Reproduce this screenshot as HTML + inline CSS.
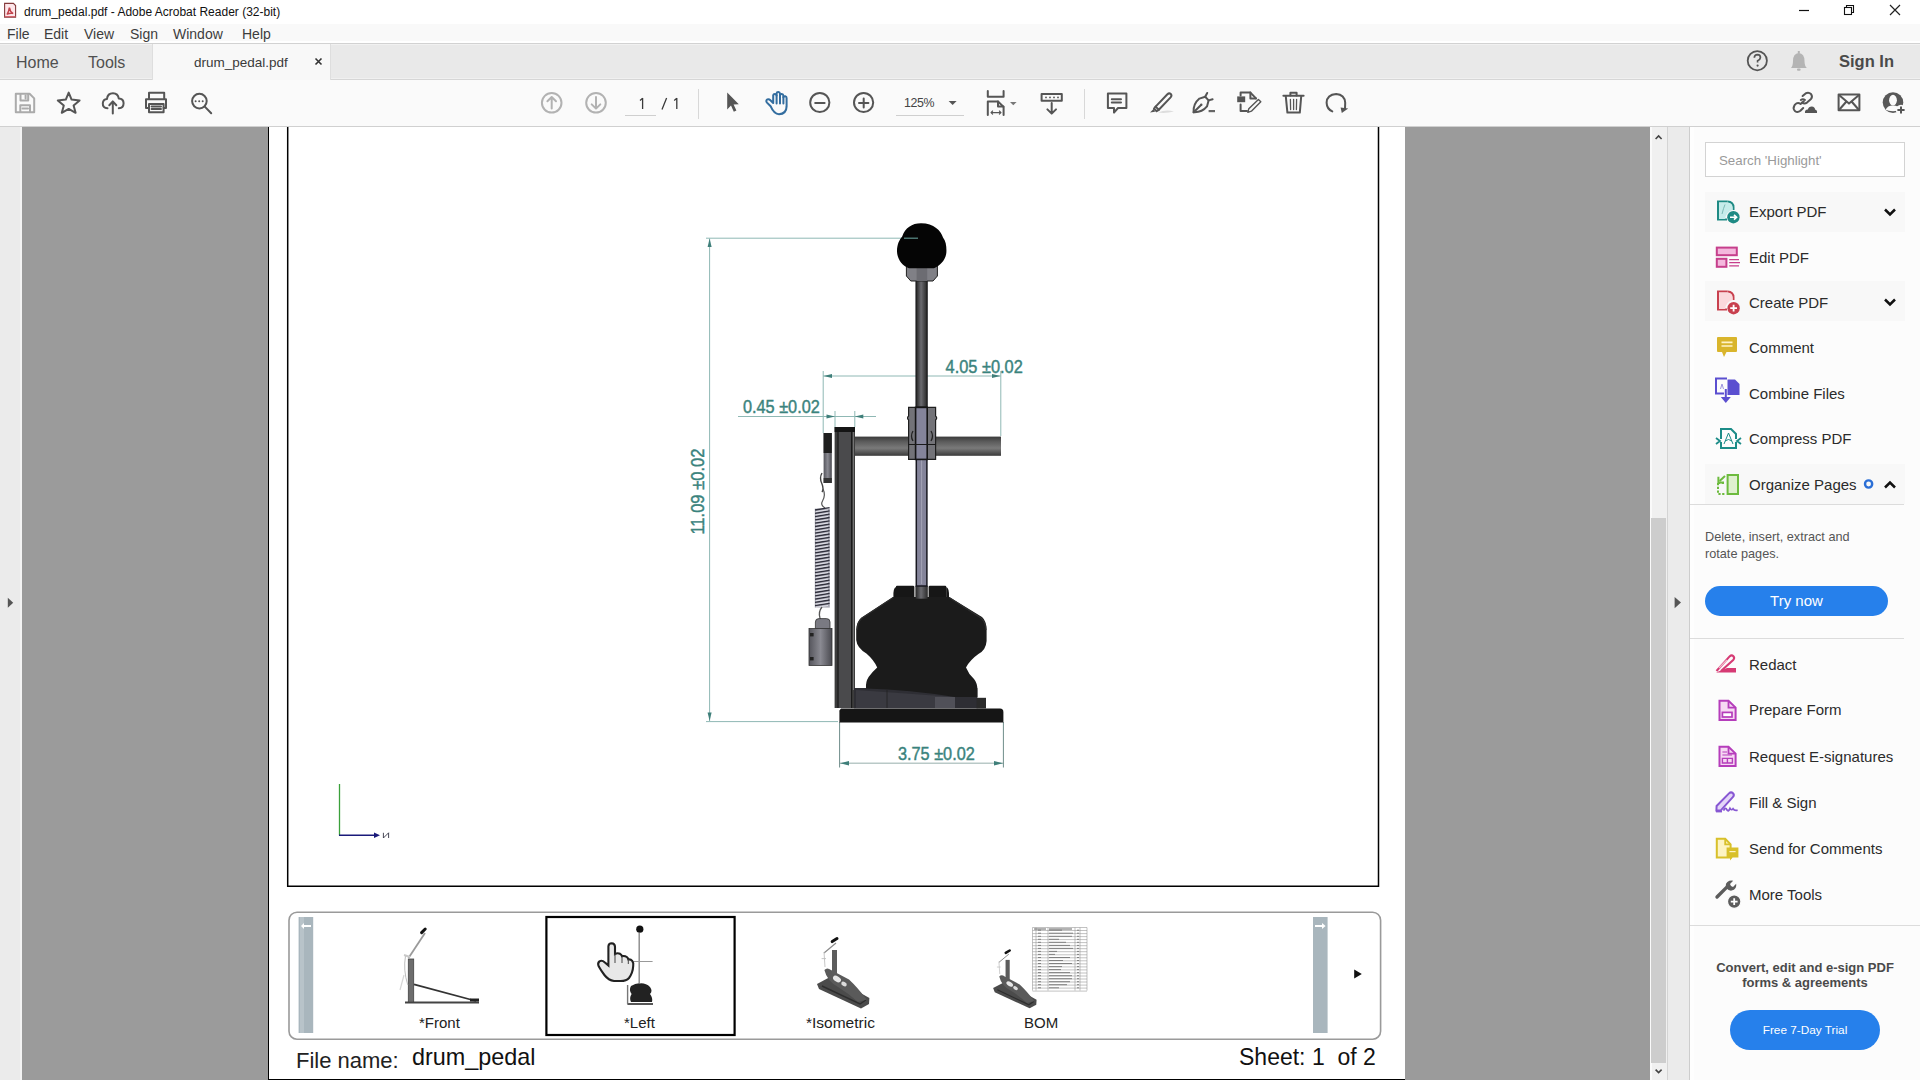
<!DOCTYPE html>
<html><head><meta charset="utf-8">
<style>
*{margin:0;padding:0;box-sizing:border-box}
html,body{width:1920px;height:1080px;overflow:hidden;background:#fff;font-family:"Liberation Sans",sans-serif;color:#222}
.a{position:absolute;white-space:nowrap}
svg{position:absolute;overflow:visible}
.ic{fill:none;stroke:#555;stroke-width:2;stroke-linecap:round;stroke-linejoin:round}
.dis{stroke:#b2b2b2}
.mi{font-size:14px;color:#3d3d3d;top:26px}
.tl{font-size:15px;color:#2b2b2b}
</style></head><body>
<!-- title bar -->
<div class="a" style="left:0;top:0;width:1920px;height:22px;background:#fff"></div>
<svg style="left:0;top:0" width="20" height="22"><path d="M4.6 3.4 H13.4 L15.6 5.6 V17.2 H4.6 Z" fill="#fde6ea" stroke="#84393b" stroke-width="1.1"/><path d="M9.4 7.6 Q9 11 7 14.6 M9.4 7.6 Q10 12 13.2 13.6 M7.2 14.2 Q10 12.6 13 13.4" fill="none" stroke="#c2434c" stroke-width="1.5"/><path d="M4.6 16.6 H15.6" stroke="#d25a64" stroke-width="1"/></svg>
<div class="a" style="left:24px;top:5px;font-size:12px;color:#111">drum_pedal.pdf - Adobe Acrobat Reader (32-bit)</div>
<svg style="left:0;top:0" width="1920" height="22">
<path d="M1799 10.5 H1809" stroke="#111" stroke-width="1.2"/>
<rect x="1844.5" y="7.5" width="7" height="7" fill="none" stroke="#111" stroke-width="1.1"/>
<path d="M1846.5 7.5 V5.5 H1853.5 V12.5 H1851.5" fill="none" stroke="#111" stroke-width="1.1"/>
<path d="M1890 5 L1900 15 M1900 5 L1890 15" stroke="#222" stroke-width="1.2"/>
</svg>
<!-- menu -->
<div class="a" style="left:0;top:24px;width:1920px;height:17px;background:#f9f9f9"></div>
<div class="a mi" style="left:7px">File</div>
<div class="a mi" style="left:44px">Edit</div>
<div class="a mi" style="left:84px">View</div>
<div class="a mi" style="left:130px">Sign</div>
<div class="a mi" style="left:173px">Window</div>
<div class="a mi" style="left:242px">Help</div>
<!-- tab bar -->
<div class="a" style="left:0;top:43px;width:1920px;height:37px;background:#e9e9e9;border-top:1px solid #d2d2d2;border-bottom:1px solid #d6d6d6"></div>
<div class="a" style="left:0;top:44px;width:1920px;height:1px;background:#f1f1f1"></div>
<div class="a" style="left:0;top:78px;width:1920px;height:1px;background:#f0f0f0"></div>
<div class="a" style="left:152px;top:44px;width:179px;height:36px;background:#f8f8f8;border-left:1px solid #dedede;border-right:1px solid #dedede"></div>
<div class="a" style="left:16px;top:54px;font-size:16px;color:#505050">Home</div>
<div class="a" style="left:88px;top:54px;font-size:16px;color:#505050">Tools</div>
<div class="a" style="left:194px;top:55px;font-size:13.5px;color:#3a3a3a">drum_pedal.pdf</div>
<svg style="left:0;top:0" width="400" height="80"><path d="M315.5 58.5 L321.5 64.5 M321.5 58.5 L315.5 64.5" stroke="#333" stroke-width="1.6"/></svg>
<!-- help / bell / sign in -->
<svg style="left:0;top:0" width="1920" height="80">
<circle cx="1757.3" cy="60.7" r="9.6" fill="none" stroke="#555" stroke-width="1.8"/>
<path d="M1754.3 57.8 Q1754.5 54.6 1757.5 54.6 Q1760.5 54.8 1760.4 57.6 Q1760.2 59.6 1757.6 60.8 V62.5" fill="none" stroke="#555" stroke-width="1.7"/>
<circle cx="1757.6" cy="65.6" r="1.1" fill="#555"/>
<path d="M1791 68 Q1793 66 1793 61 Q1793 53.5 1798.8 53 Q1804.5 53.5 1804.5 61 Q1804.5 66 1806.8 68 Z" fill="#b4b4b4"/>
<rect x="1797" y="68.5" width="3.6" height="2.2" rx="1" fill="#b4b4b4"/>
<rect x="1797.8" y="51" width="2" height="2.5" fill="#b4b4b4"/>
</svg>
<div class="a" style="left:1839px;top:52px;font-size:16.5px;font-weight:bold;color:#4a4a4a">Sign In</div>
<!-- toolbar -->
<div class="a" style="left:0;top:80px;width:1920px;height:47px;background:#fafafa;border-bottom:1px solid #d0d0d0"></div>
<svg style="left:0;top:0" width="700" height="127"><path d="M642.6 98 V109 M642.6 98.2 L640 100.4 M666.6 98 L662 109.4 M676.8 98 V109 M676.8 98.2 L674.2 100.4" fill="none" stroke="#3a3a3a" stroke-width="1.3"/></svg>
<div class="a" style="left:625px;top:115px;width:31px;height:1px;background:#cfcfcf"></div>
<div class="a" style="left:904px;top:95.5px;font-size:12.4px;letter-spacing:-0.4px;color:#444">125%</div>
<div class="a" style="left:896px;top:115px;width:68px;height:1px;background:#cfcfcf"></div>
<div class="a" style="left:698px;top:89px;width:1px;height:30px;background:#d8d8d8"></div>
<div class="a" style="left:1084px;top:89px;width:1px;height:30px;background:#d8d8d8"></div>
<!-- toolbar icons -->
<svg style="left:0;top:0" width="1920" height="127">
<g class="ic" stroke-width="1.6" style="stroke:#ababab">
<path d="M15.8 93.8 H29.6 L34.2 98.4 V112.2 H15.8 Z"/>
<path d="M20.5 94 V100.6 H28.2 V94"/><path d="M25.6 95.5 V98.5"/>
<path d="M20.3 112 V105.2 H30 V112"/><path d="M22.5 108.6 H28"/>
</g>
<path class="ic" stroke-width="1.8" d="M68.7 92.6 L71.6 99.6 L79.6 100.4 L73.6 105.5 L75.6 112.8 L68.7 108.9 L61.8 112.8 L63.8 105.5 L57.8 100.4 L65.8 99.6 Z"/>
<path class="ic" stroke-width="1.8" d="M107.5 108.3 Q102.6 108 102.8 103.4 Q103 99.3 107 98.9 Q107.6 93.3 113 93.3 Q118 93.4 118.8 98.6 Q123.5 98.9 123.6 103.2 Q123.5 108 118.8 108.3"/>
<path class="ic" stroke-width="1.8" d="M112.8 113.4 V101.6 M109.3 105.2 L112.8 101.4 L116.3 105.2"/>
<g class="ic" stroke-width="1.9">
<path d="M149 98.6 V92.8 H164.2 V98.6"/>
<path d="M149 108 H146 V99.2 H166 V108 H163.6"/>
<path d="M149 104 V112.3 H163.6 V104 Z"/>
<path d="M151.6 106.5 H161 M151.6 109 H161"/>
</g>
<circle class="ic" stroke-width="2.1" cx="199.4" cy="101.1" r="7.3"/>
<path class="ic" stroke-width="2.4" d="M204.8 106.6 L211.2 113.2"/>
<circle cx="195.6" cy="101.2" r="1" fill="#555"/><circle cx="199.2" cy="101.2" r="1" fill="#555"/><circle cx="202.7" cy="101.2" r="1" fill="#555"/>
<!-- nav -->
<circle class="ic dis" stroke-width="2" cx="551.7" cy="102.8" r="9.8"/>
<path class="ic dis" stroke-width="2" d="M551.7 108.6 V97.2 M547.4 101.2 L551.7 97 L556 101.2"/>
<circle class="ic dis" stroke-width="2" cx="596" cy="102.8" r="9.8"/>
<path class="ic dis" stroke-width="2" d="M596 97 V108.4 M591.7 104.4 L596 108.6 L600.3 104.4"/>
<!-- select arrow -->
<path d="M727.2 92.6 L738.8 104.3 L733.6 104.4 L736.4 110.6 L733.8 111.8 L731 105.6 L727.2 109.4 Z" fill="#555"/>
<!-- hand -->
<path class="ic" stroke="#2f6ea5" stroke-width="1.9" style="stroke:#336d9f" d="M770.6 106.2 L767 102.6 Q765.4 100.6 767.4 99.4 Q768.9 98.7 770.4 100.2 L773.2 103 V95.3 Q773.5 93.9 775 94 Q776.4 94.1 776.6 95.6 V93.4 Q776.8 91.9 778.4 92 Q779.8 92.1 780 93.6 V95.2 Q780.3 93.8 781.7 93.9 Q783.2 94.1 783.4 95.6 V97.3 Q783.8 96 785.3 96.2 Q786.6 96.5 786.6 98 V106.4 Q786.4 114 779 114.2 Q774 114.2 770.6 106.2 Z"/>
<path class="ic" style="stroke:#336d9f" stroke-width="1.7" d="M776.6 95.6 V103.4 M780 95 V103.4 M783.4 97 V103.4"/>
<!-- zoom -->
<circle class="ic" stroke-width="1.9" cx="819.8" cy="102.5" r="9.6"/>
<path class="ic" stroke-width="2" d="M815.2 103 H824.6"/>
<circle class="ic" stroke-width="1.9" cx="863.6" cy="102.5" r="9.6"/>
<path class="ic" stroke-width="2" d="M859 103 H868.4 M863.7 98.4 V107.6"/>
<path d="M948.6 101 H956.6 L952.6 105 Z" fill="#555"/>
<!-- fit page -->
<g class="ic" stroke-width="1.7">
<path d="M987.8 91 V96.8 H1003.6 V91"/>
<path d="M987.8 115 V101.4 H998 L1003.6 107 V115"/>
<path d="M998 101.6 V106.4 H1003.4"/>
<path d="M991 112.6 H1001 M991 112.6 L992.6 111 M991 112.6 L992.6 114.2 M1001 112.6 L999.4 111 M1001 112.6 L999.4 114.2" stroke-width="1.1"/>
</g>
<path d="M1010 102 H1016.6 L1013.3 105.3 Z" fill="#777"/>
<!-- scroll -->
<rect class="ic" stroke-width="1.8" x="1041.6" y="94" width="20.2" height="6.8"/>
<g fill="#555"><circle cx="1046" cy="97.4" r="0.9"/><circle cx="1050" cy="97.4" r="0.9"/><circle cx="1054" cy="97.4" r="0.9"/><circle cx="1058" cy="97.4" r="0.9"/></g>
<path class="ic" stroke-width="1.8" d="M1051.7 103 V113.6 M1047.4 109.4 L1051.7 113.6 L1056 109.4"/>
<!-- comment -->
<path class="ic" stroke-width="1.9" d="M1107.9 93.6 H1126.4 V108 H1118 L1114 112.6 V108 H1107.9 Z"/>
<path class="ic" stroke-width="1.6" d="M1111.8 99.2 H1121 M1111.8 102.4 H1121"/>
<!-- highlighter -->
<path class="ic" stroke-width="1.8" d="M1155.6 106.6 L1167.4 94.2 Q1169.2 92.6 1170.8 94 Q1172.2 95.6 1170.6 97.4 L1158.8 109.8 Z"/>
<path class="ic" stroke-width="1.6" d="M1155.6 106.6 L1154 108.6 L1156.6 111.2 L1158.8 109.8"/>
<path d="M1154 108.6 L1150 112.6 L1155 111.8 Z" fill="#555"/>
<path d="M1158 112.6 Q1166 109 1174 111.5 Q1166 113.6 1158 112.6 Z" fill="#ddd"/>
<!-- sign -->
<path class="ic" stroke-width="1.7" d="M1193.6 112.2 Q1193 104 1199.4 98.6 L1205.2 96.8 L1208.6 100.4 L1207 106.4 Q1202 112.6 1193.6 112.2 Z"/>
<path class="ic" stroke-width="1.7" d="M1205.2 96.8 L1207.2 93 M1208.6 100.4 L1212.6 99.2 M1193.6 112.2 L1200.8 105.2"/>
<circle cx="1201.3" cy="104.7" r="1.2" fill="#555"/>
<path d="M1208.6 110 H1215 V112.2 H1208.6 Z" fill="#666"/>
<!-- edit page -->
<g class="ic" stroke-width="1.8">
<path d="M1240.6 104.4 V111 H1247"/>
<path d="M1240.6 95.6 V92.6 H1250.4 L1256 98.4"/>
<path d="M1250.4 92.6 V98.4 H1256"/>
<path d="M1247.8 112.4 L1248.8 108.8 L1258.4 99.4 L1260.8 101.8 L1251.4 111.2 Z" stroke-width="1.4"/>
</g>
<rect x="1237.2" y="96.4" width="8" height="5.8" fill="#555"/>
<!-- trash -->
<g class="ic" stroke-width="1.9">
<path d="M1283.4 95.8 H1303.6"/>
<path d="M1290.4 95.4 V92.8 H1296.6 V95.4"/>
<path d="M1285.8 96.4 L1287.4 112.6 H1299.8 L1301.2 96.4"/>
<path d="M1290.4 99.4 L1290.6 109.6 M1293.6 99.4 V109.6 M1296.6 99.4 L1296.4 109.6" stroke-width="1.3"/>
</g>
<!-- rotate -->
<path class="ic" stroke-width="1.9" d="M1332.3 111.4 Q1326.8 109 1326.6 102.6 Q1327 94.6 1336.2 94 Q1344.6 94.4 1345.2 102.8 L1345 108.6"/>
<path d="M1340.6 107.4 L1348.2 108.6 L1341.8 113 Z" fill="#555"/>
<!-- right icons -->
<g class="ic" stroke-width="1.9">
<path d="M1802.6 96 L1805.6 93.4 Q1808.6 91.8 1811 94 Q1812.9 96.5 1811 99 L1807 102.6 Q1804.5 104.4 1802 102.6"/>
<path d="M1803.8 101.2 L1800.6 104 Q1797.6 101.8 1795 104.6 L1794.2 106 Q1792.6 108.7 1795.2 111.2 Q1797.6 113 1800.4 110.8 L1803.2 108"/>
<path d="M1800.8 100 Q1803 98.4 1805 100"/>
</g>
<path d="M1805 113 Q1804.4 109.8 1807.8 109.4 Q1808.6 106.4 1811.8 106.4 Q1815 106.6 1815 109.6 Q1817.6 110.2 1817 113 Z" fill="#555"/>
<rect class="ic" stroke-width="2.2" x="1838.6" y="94.6" width="20.8" height="15.6"/>
<path class="ic" stroke-width="1.1" d="M1839 95 L1849 103.6 L1859 95 M1839 110 L1846 102 M1859 110 L1852 102"/>
<circle cx="1893" cy="102.6" r="10.3" fill="#585858"/>
<ellipse cx="1893" cy="100.2" rx="3.9" ry="5.4" fill="#fafafa"/>
<path d="M1885.6 109.8 Q1887.4 105.4 1893 105.4 Q1898.6 105.4 1900.4 109.8 Q1898 111.2 1893 111.2 Q1888 111.2 1885.6 109.8 Z" fill="#fafafa"/>
<circle cx="1901" cy="110" r="5.2" fill="#fafafa"/>
<path d="M1897.4 110 H1904.6 M1901 106.4 V113.6" stroke="#555" stroke-width="2"/>
</svg>
<!-- content -->
<div class="a" style="left:0;top:127px;width:22px;height:953px;background:#ebebeb;border-right:2px solid #f4f4f4"></div>
<div class="a" style="left:22px;top:127px;width:1628px;height:953px;background:#9b9b9b"></div>
<div class="a" style="left:268px;top:127px;width:1137px;height:953px;background:#fff;border-left:1px solid #000;border-bottom:1px solid #000"></div>
<div class="a" style="left:1650px;top:127px;width:17px;height:953px;background:#f0f0f0;border-left:2px solid #fafafa"></div>
<div class="a" style="left:1651px;top:518px;width:15px;height:545px;background:#cdcdcd"></div>
<div class="a" style="left:1667px;top:127px;width:23px;height:953px;background:#ebebeb;border-left:1px solid #d4d4d4;border-right:1px solid #cdcdcd"></div>
<div class="a" style="left:1690px;top:127px;width:230px;height:953px;background:#fcfcfc;border-left:4px solid #fefefe"></div>
<!-- PAGE CONTENT -->
<svg style="left:0;top:0" width="1420" height="1080">
<defs>
<linearGradient id="gx" x1="0" y1="0" x2="1" y2="0"><stop offset="0" stop-color="#262626"/><stop offset="0.45" stop-color="#6b6b70"/><stop offset="1" stop-color="#2a2a2a"/></linearGradient>
<linearGradient id="gy" x1="0" y1="0" x2="0" y2="1"><stop offset="0" stop-color="#3a3a3a"/><stop offset="0.25" stop-color="#5a5a5a"/><stop offset="0.6" stop-color="#7a7a7a"/><stop offset="1" stop-color="#3a3a3a"/></linearGradient>
<linearGradient id="gp" x1="0" y1="0" x2="1" y2="0"><stop offset="0" stop-color="#111"/><stop offset="0.15" stop-color="#3b3b40"/><stop offset="0.8" stop-color="#45454b"/><stop offset="1" stop-color="#151515"/></linearGradient>
<linearGradient id="gb" x1="0" y1="0" x2="1" y2="0"><stop offset="0" stop-color="#55555c"/><stop offset="0.5" stop-color="#8a8a92"/><stop offset="1" stop-color="#4a4a50"/></linearGradient>
</defs>
<!-- frame -->
<path d="M287.7 127 V886.3 H1378.5 V127" fill="none" stroke="#000" stroke-width="1.5"/>
<!-- dimension lines -->
<g stroke="#8fb8b4" stroke-width="1" fill="none">
<path d="M706 238.2 H905"/>
<path d="M706 721.6 H838"/>
<path d="M709.6 238.5 V721"/>
<path d="M823 376 H1000.5"/>
<path d="M823.2 371 V433"/>
<path d="M1000.8 371 V436"/>
<path d="M738 416.5 H876"/>
<path d="M835 411 V427"/>
<path d="M854.8 411 V427"/>

</g>
<path d="M839.6 763.2 H1003.4" stroke="#b9c9c7" stroke-width="1.6"/>
<path d="M839.6 722 V767.5 M1003.4 722 V767.5" stroke="#6f8d8a" stroke-width="1"/>
<g fill="#3f7f7a">
<path d="M709.6 238.5 L707.6 247 L711.6 247 Z"/>
<path d="M709.6 721 L707.6 712.5 L711.6 712.5 Z"/>
<path d="M823.5 376 L832 374 L832 378 Z"/>
<path d="M1000.5 376 L992 374 L992 378 Z"/>
<path d="M835 416.5 L826.5 414.5 L826.5 418.5 Z"/>
<path d="M854.8 416.5 L863.3 414.5 L863.3 418.5 Z"/>
<path d="M840 763.2 L849 761 L849 765.4 Z"/>
<path d="M1003 763.2 L994 761 L994 765.4 Z"/>
</g>
<!-- axis triad -->
<path d="M339.5 784 V835.4" stroke="#3aa03a" stroke-width="1.3"/>
<path d="M339 835.3 H377" stroke="#1a1a7a" stroke-width="1.6"/>
<path d="M380 835.3 L374 832.6 L374 838 Z" fill="#1a1a7a"/>
<path d="M383.4 832.8 V838 L388.6 832.8 V838" fill="none" stroke="#334" stroke-width="0.9"/>
<!-- PEDAL -->
<!-- post -->
<rect x="834.6" y="427" width="20.4" height="281" fill="#3c3c3c"/>
<rect x="838.6" y="427" width="12.6" height="281" fill="#4a4a4c"/>
<path d="M838 427 V708 M851.6 427 V708" stroke="#1a1a1a" stroke-width="1.1"/>
<path d="M853.4 432 V690" stroke="#7a7a7a" stroke-width="1"/>
<rect x="834.6" y="427" width="20.4" height="5" fill="#151515"/>
<path d="M855 688 V708" stroke="#777" stroke-width="0.8"/>
<!-- horizontal bar -->
<rect x="855" y="436.6" width="146" height="19.2" fill="url(#gy)"/>
<!-- cam piece -->
<rect x="823.6" y="433" width="8.2" height="50" fill="url(#gb)"/>
<rect x="823.6" y="433" width="8.2" height="20" fill="#1e1e1e"/>
<rect x="823.6" y="478" width="8.2" height="5" fill="#333"/>
<path d="M822 473 Q819 478 822 484 Q824 489 822 492" fill="none" stroke="#444" stroke-width="1.4"/>
<path d="M823 489 Q826 495 822.5 501 Q820 505 825 508" fill="none" stroke="#555" stroke-width="1.2"/>
<!-- spring -->
<rect x="814.8" y="508.6" width="15" height="99" fill="#a9a9b4"/>
<path d="M815 510.0 L829.6 507.6 M815 513.3 L829.6 510.9 M815 516.6 L829.6 514.2 M815 519.9 L829.6 517.5 M815 523.2 L829.6 520.8 M815 526.5 L829.6 524.1 M815 529.8 L829.6 527.4 M815 533.1 L829.6 530.7 M815 536.4 L829.6 534.0 M815 539.7 L829.6 537.3 M815 543.0 L829.6 540.6 M815 546.3 L829.6 543.9 M815 549.6 L829.6 547.2 M815 552.9 L829.6 550.5 M815 556.2 L829.6 553.8 M815 559.5 L829.6 557.1 M815 562.8 L829.6 560.4 M815 566.1 L829.6 563.7 M815 569.4 L829.6 567.0 M815 572.7 L829.6 570.3 M815 576.0 L829.6 573.6 M815 579.3 L829.6 576.9 M815 582.6 L829.6 580.2 M815 585.9 L829.6 583.5 M815 589.2 L829.6 586.8 M815 592.5 L829.6 590.1 M815 595.8 L829.6 593.4 M815 599.1 L829.6 596.7 M815 602.4 L829.6 600.0 M815 605.7 L829.6 603.3" stroke="#30303c" stroke-width="1.3"/>
<path d="M816 511.6 L828 509.8 M816 514.9 L828 513.1 M816 518.2 L828 516.4 M816 521.5 L828 519.7 M816 524.8 L828 523.0 M816 528.1 L828 526.3 M816 531.4 L828 529.6 M816 534.7 L828 532.9 M816 538.0 L828 536.2 M816 541.3 L828 539.5 M816 544.6 L828 542.8 M816 547.9 L828 546.1 M816 551.2 L828 549.4 M816 554.5 L828 552.7 M816 557.8 L828 556.0 M816 561.1 L828 559.3 M816 564.4 L828 562.6 M816 567.7 L828 565.9 M816 571.0 L828 569.2 M816 574.3 L828 572.5 M816 577.6 L828 575.8 M816 580.9 L828 579.1 M816 584.2 L828 582.4 M816 587.5 L828 585.7 M816 590.8 L828 589.0 M816 594.1 L828 592.3 M816 597.4 L828 595.6 M816 600.7 L828 598.9 M816 604.0 L828 602.2 M816 607.3 L828 605.5" stroke="#e8e8ee" stroke-width="0.9"/>
<path d="M822 607 Q818 612 820 618 Q822 623 826 626" fill="none" stroke="#555" stroke-width="1.3"/>
<!-- anchor block -->
<path d="M815.4 628.6 V622 Q815.4 618.6 819 618.6 H826.4 Q830 618.6 830 622 V628.6 Z" fill="#7a7a82" stroke="#333" stroke-width="0.8"/>
<rect x="809" y="628.5" width="23" height="37" fill="url(#gb)" stroke="#333" stroke-width="0.8"/>
<rect x="810" y="633" width="3.6" height="3.4" fill="#222"/><rect x="810" y="657" width="3.6" height="3.4" fill="#222"/>
<!-- heel section -->
<path d="M854 688 H977.4 V708.2 H854 Z" fill="#2e2e34"/>
<path d="M856 690 L955 697 V708 H856 Z" fill="#3a3a41"/>
<path d="M935 697 H955 V708 H935 Z" fill="#505058"/>
<path d="M887 690 V708" stroke="#222" stroke-width="0.8"/>
<!-- footboard blob -->
<path d="M896 598.8 V586.6 Q896 585.7 897 585.7 H913 Q914.4 585.7 914.4 587 V598.8 H928.6 V587 Q928.6 585.7 930 585.7 H945.2 Q946.2 585.7 946.2 586.6 V598.8 Z" fill="#161616"/>
<path d="M893.4 597 Q893 588 896 587 V598.8 Z M949 597 Q949.4 588 946.2 587 V598.8 Z" fill="#161616"/>
<path d="M893.2 597 H949.2 L982 617 Q986.6 621 986.6 630 V641 Q986 650 978.4 654 Q970 660 966 667.4 Q968.6 674 974 679 Q977.4 683 977.4 690 V697 H955 Q910 690 866 688.6 Q865.4 682 868.6 677 Q873 671 877.2 667.4 Q874 660 866.4 653.4 Q857 648 856.2 640 V630 Q856.4 622 861 618 Z" fill="#1b1b1b"/>
<path d="M857 630 Q857.5 622 862 618 L893.2 597.6" fill="none" stroke="#2e2e2e" stroke-width="1.2"/>
<path d="M986 630 Q985.6 622 981 618 L949.2 597.6" fill="none" stroke="#2e2e2e" stroke-width="1.2"/>
<rect x="915.4" y="585.7" width="12.4" height="13" fill="url(#gx)"/>
<!-- small bump right -->
<rect x="976.6" y="697.8" width="9.4" height="10.6" fill="#2a2a2a"/>
<!-- base plate -->
<path d="M841 708.4 H1000 Q1003.4 708.4 1003.4 712 V722.4 H839.4 V710.4 Z" fill="#151515"/>
<!-- shaft -->
<rect x="916.3" y="279" width="10.6" height="307" fill="#84849a" stroke="#17171f" stroke-width="1.5"/>
<path d="M921.6 282 V584" stroke="#a4a4b6" stroke-width="1"/>
<rect x="916.3" y="279" width="10.6" height="128" fill="url(#gx)" stroke="#222" stroke-width="1"/>
<!-- clamp hub -->
<path d="M908.6 407.4 H935.6 V416 Q937.8 418 935.6 420 V459.4 H908.6 V420 Q906.4 418 908.6 416 Z" fill="#737378" stroke="#1f1f1f" stroke-width="1.2"/>
<rect x="915.6" y="407.4" width="11.6" height="52" fill="#84849a" stroke="#151515" stroke-width="1.6"/>
<path d="M908.6 444.5 H935.6" stroke="#1a1a1a" stroke-width="1"/>
<path d="M913 431 Q910 436 913 441 M931 431 Q934 436 931 441" fill="none" stroke="#222" stroke-width="1.3"/>
<!-- top hub -->
<path d="M906.4 263 H937.4 V276 L933 281 H910.8 L906.4 276 Z" fill="#808086" stroke="#202020" stroke-width="1"/>
<rect x="916.6" y="263" width="10.6" height="18" fill="#6c6c72"/>
<!-- ball -->
<path d="M921 223.3 C934 223.3 941 231 943 237.5 C946 241 946.6 247 946.4 252 C946 260 940 265.6 934 268.2 H909 C902 265.6 897.2 259 897 251.5 C897 244 899.6 239.6 902.2 236.5 C905 228 912 223.3 921 223.3 Z" fill="#050505"/>
<path d="M904 238.2 H918" stroke="#5c8f8a" stroke-width="1.2"/>
<!-- dimension text -->
<g fill="#3a837d" stroke="#3a837d" stroke-width="0.45" font-family="Liberation Sans" font-size="18.6px">
<text x="0" y="0" transform="translate(945.6 372.8) scale(0.88 1)">4.05 ±0.02</text>
<text x="0" y="0" transform="translate(743 412.6) scale(0.875 1)">0.45 ±0.02</text>
<text x="0" y="0" transform="translate(898 759.8) scale(0.875 1)">3.75 ±0.02</text>
<text x="0" y="0" transform="translate(703.8 534.6) rotate(-90) scale(0.89 1)">11.09 ±0.02</text>
</g>
<!-- THUMB PANEL -->
<rect x="289" y="912.2" width="1091.6" height="127" rx="8" fill="none" stroke="#9a9a9a" stroke-width="1.6"/>
<rect x="298.6" y="917" width="14.6" height="116" fill="#a9b6bd"/>
<rect x="300" y="917" width="4" height="116" fill="#b8c3c9"/>
<path d="M302 926 H311" stroke="#fff" stroke-width="2"/><path d="M301 926 L304 923 L304 929 Z" fill="#fff"/>
<rect x="1313" y="917" width="14.6" height="116" fill="#a9b6bd"/>
<path d="M1315 926 H1324" stroke="#fff" stroke-width="2"/><path d="M1325.6 926 L1322 923 L1322 929 Z" fill="#fff"/>
<path d="M1354.2 969.4 L1361.8 974 L1354.2 978.6 Z" fill="#111"/>
<rect x="546.4" y="917" width="188.2" height="118" fill="none" stroke="#000" stroke-width="2.2"/>
<!-- front thumb -->
<path d="M405 1002.4 H479" stroke="#444" stroke-width="2"/>
<rect x="408.3" y="959" width="5.4" height="43" fill="#6d6d6d" stroke="#444" stroke-width="0.8"/>
<path d="M414 984.3 L476 1001" stroke="#333" stroke-width="1.8"/>
<path d="M470 1000 H479" stroke="#222" stroke-width="3"/>
<path d="M408.5 958 L425 933" stroke="#9a9a9a" stroke-width="1.8"/>
<path d="M421.6 932.6 L425.2 929" stroke="#111" stroke-width="3" stroke-linecap="round"/>
<path d="M405.5 956 Q403 970 407.8 985" fill="none" stroke="#bdbdbd" stroke-width="1"/><path d="M400 990 L404 975" stroke="#d6d6d6" stroke-width="1.2"/><path d="M404 955 L410 957" stroke="#c8c8c8" stroke-width="2"/>
<!-- left thumb -->
<circle cx="639.8" cy="929.2" r="3.6" fill="#111"/>
<path d="M639.2 933 V983" stroke="#888" stroke-width="1.4"/>
<path d="M632 961.5 H652.6" stroke="#999" stroke-width="1"/>
<path d="M631 986 Q636 983 640 983.4 Q646 983 650 987 Q653 991 650 994 Q653 998 652 1002 H631 Q629 998 631.6 994 Q628.6 990 631 986 Z" fill="#222"/>
<path d="M627.4 1004 H653" stroke="#555" stroke-width="2"/>
<path d="M627.6 985 V1004" stroke="#777" stroke-width="1.4"/>
<!-- hand cursor -->
<path d="M608.4 959 V946.4 Q608.6 943.2 611.7 943.2 Q614.8 943.4 615 946.6 V954 Q617.4 952.6 620 953.8 Q621.6 954.8 622 956.2 Q624.6 955.4 626.8 957 Q628 958 628.3 959.4 Q630.8 959 632.2 960.8 Q633.8 962.8 633.2 966 Q632.8 973 629 978 Q626.4 981 620.6 981 H614 Q608.6 980.4 604.4 975 Q601 970.6 598.8 966.6 Q597.2 963.2 599.4 961.4 Q602 959.8 604.6 962.2 L608.4 965.4 Z" fill="#e8e8e8" stroke="#222" stroke-width="2.1"/>
<path d="M615 954 V963 M622 956.2 V963 M628.3 959.4 V964" fill="none" stroke="#444" stroke-width="1"/>
<!-- iso thumb -->
<g id="iso">
<path d="M817 984 L831 976.6 L869.4 998 L869 1004 L861 1008.4 L819 989 Z" fill="#4b4b4b"/>
<path d="M822 986 L860 1004 L866 1000" fill="none" stroke="#2e2e2e" stroke-width="1.4"/>
<path d="M824.4 970 Q827 967 831 970 L849 979.6 Q857 987 866.6 999.4 L858 1002 Q848 993 838 987 Q827 981 824.4 970 Z" fill="#5a5a5a"/>
<ellipse cx="837" cy="979" rx="4.4" ry="2.6" transform="rotate(32 837 979)" fill="#e6e6e6"/>
<ellipse cx="844" cy="984" rx="3" ry="2" transform="rotate(32 844 984)" fill="#dcdcdc"/>
<rect x="832" y="950" width="5" height="24" fill="#5c5c5c"/>
<path d="M824 953 L836 943" stroke="#8a8a8a" stroke-width="1.2"/>
<path d="M832.2 941.6 L837 938.6" stroke="#111" stroke-width="3" stroke-linecap="round"/>
<path d="M824 952 L825 967 M821.6 958.6 H826" stroke="#c0c0c0" stroke-width="0.9"/>
</g>
<!-- bom thumb -->
<use href="#iso" transform="translate(315 171.4) scale(0.83)"/>
<g stroke="#999" stroke-width="0.6">
<path d="M1032.5 927.5 H1087"/>
<path d="M1032.5 930.5 H1087"/>
<path d="M1032.5 933.6 H1087"/>
<path d="M1032.5 936.6 H1087"/>
<path d="M1032.5 939.6 H1087"/>
<path d="M1032.5 942.6 H1087"/>
<path d="M1032.5 945.7 H1087"/>
<path d="M1032.5 948.7 H1087"/>
<path d="M1032.5 951.7 H1087"/>
<path d="M1032.5 954.8 H1087"/>
<path d="M1032.5 957.8 H1087"/>
<path d="M1032.5 960.8 H1087"/>
<path d="M1032.5 963.9 H1087"/>
<path d="M1032.5 966.9 H1087"/>
<path d="M1032.5 969.9 H1087"/>
<path d="M1032.5 973.0 H1087"/>
<path d="M1032.5 976.0 H1087"/>
<path d="M1032.5 979.0 H1087"/>
<path d="M1032.5 982.0 H1087"/>
<path d="M1032.5 985.1 H1087"/>
<path d="M1032.5 988.1 H1087"/>
<path d="M1032.5 991.1 H1087"/>
<path d="M1032.5 927.5 V990.6 M1036 927.5 V990.6 M1048 927.5 V990.6 M1075 927.5 V990.6 M1080 927.5 V990.6 M1087 927.5 V990.6"/>
</g>
<g stroke="#777" stroke-width="0.9">
<path d="M1049 930.2 H1062 M1038 930.2 H1041 M1077 930.2 H1079 M1049 933.2 H1073 M1038 933.2 H1041 M1077 933.2 H1079 M1049 936.3 H1072 M1038 936.3 H1041 M1077 936.3 H1079 M1049 939.3 H1059 M1038 939.3 H1041 M1077 939.3 H1079 M1049 942.3 H1066 M1038 942.3 H1041 M1077 942.3 H1079 M1049 945.4 H1070 M1038 945.4 H1041 M1077 945.4 H1079 M1049 948.4 H1073 M1038 948.4 H1041 M1077 948.4 H1079 M1049 951.4 H1057 M1038 951.4 H1041 M1077 951.4 H1079 M1049 954.4 H1055 M1038 954.4 H1041 M1077 954.4 H1079 M1049 957.5 H1070 M1038 957.5 H1041 M1077 957.5 H1079 M1049 960.5 H1063 M1038 960.5 H1041 M1077 960.5 H1079 M1049 963.5 H1072 M1038 963.5 H1041 M1077 963.5 H1079 M1049 966.6 H1062 M1038 966.6 H1041 M1077 966.6 H1079 M1049 969.6 H1061 M1038 969.6 H1041 M1077 969.6 H1079 M1049 972.6 H1070 M1038 972.6 H1041 M1077 972.6 H1079 M1049 975.7 H1072 M1038 975.7 H1041 M1077 975.7 H1079 M1049 978.7 H1072 M1038 978.7 H1041 M1077 978.7 H1079 M1049 981.7 H1070 M1038 981.7 H1041 M1077 981.7 H1079 M1049 984.7 H1067 M1038 984.7 H1041 M1077 984.7 H1079 M1049 987.8 H1059 M1038 987.8 H1041 M1077 987.8 H1079"/>
<path d="M1049 929 H1072 M1034 929 H1046" stroke="#555"/>
</g>
</svg>
<div class="a" style="left:419px;top:1014px;font-size:15px;color:#222">*Front</div>
<div class="a" style="left:624px;top:1014px;font-size:15px;color:#222">*Left</div>
<div class="a" style="left:806px;top:1014px;font-size:15.5px;color:#222">*Isometric</div>
<div class="a" style="left:1024px;top:1014px;font-size:15px;color:#222">BOM</div>
<div class="a" style="left:296px;top:1048px;font-size:22px;color:#222">File name:</div>
<div class="a" style="left:412px;top:1043.5px;font-size:23.4px;color:#111">drum_pedal</div>
<div class="a" style="left:1239px;top:1044px;font-size:23px;color:#111">Sheet: 1&nbsp; of 2</div>
<!-- right pane -->
<div class="a" style="left:1705px;top:142px;width:200px;height:35px;background:#fff;border:1px solid #d3d3d3"></div>
<div class="a" style="left:1719px;top:153px;font-size:13.3px;color:#9a9a9a">Search 'Highlight'</div>
<div class="a" style="left:1705px;top:192px;width:200px;height:40px;background:#f8f8f8"></div>
<div class="a" style="left:1705px;top:281px;width:200px;height:40px;background:#f8f8f8"></div>
<div class="a" style="left:1705px;top:464px;width:200px;height:40px;background:#f8f8f8"></div>
<div class="a" style="left:1690px;top:504px;width:214px;height:1px;background:#dcdcdc"></div>
<div class="a tl" style="left:1749px;top:203px">Export PDF</div>
<div class="a tl" style="left:1749px;top:249px">Edit PDF</div>
<div class="a tl" style="left:1749px;top:294px">Create PDF</div>
<div class="a tl" style="left:1749px;top:339px">Comment</div>
<div class="a tl" style="left:1749px;top:385px">Combine Files</div>
<div class="a tl" style="left:1749px;top:430px">Compress PDF</div>
<div class="a tl" style="left:1749px;top:476px">Organize Pages</div>
<div class="a" style="left:1705px;top:529px;font-size:12.7px;color:#555;line-height:16.6px">Delete, insert, extract and<br>rotate pages.</div>
<div class="a" style="left:1705px;top:586px;width:183px;height:30px;border-radius:15px;background:#2680eb;color:#fff;font-size:15px;text-align:center;line-height:30px">Try now</div>
<div class="a" style="left:1690px;top:638px;width:214px;height:1px;background:#dcdcdc"></div>
<div class="a tl" style="left:1749px;top:656px">Redact</div>
<div class="a tl" style="left:1749px;top:701px">Prepare Form</div>
<div class="a tl" style="left:1749px;top:748px">Request E-signatures</div>
<div class="a tl" style="left:1749px;top:794px">Fill &amp; Sign</div>
<div class="a tl" style="left:1749px;top:840px">Send for Comments</div>
<div class="a tl" style="left:1749px;top:886px">More Tools</div>
<div class="a" style="left:1690px;top:925px;width:230px;height:1px;background:#dcdcdc"></div>
<div class="a" style="left:1690px;top:960px;width:230px;text-align:center;font-size:13px;font-weight:bold;color:#4a4a4a;line-height:15px">Convert, edit and e-sign PDF<br>forms &amp; agreements</div>
<div class="a" style="left:1730px;top:1010px;width:150px;height:40px;border-radius:20px;background:#2680eb;color:#fff;font-size:11.8px;text-align:center;line-height:40px">Free 7-Day Trial</div>
<svg style="left:0;top:0" width="1920" height="1080">
<!-- chevrons -->
<path d="M1885 209.5 L1890 214.5 L1895 209.5" fill="none" stroke="#111" stroke-width="2.5"/>
<path d="M1885 299.5 L1890 304.5 L1895 299.5" fill="none" stroke="#111" stroke-width="2.5"/>
<path d="M1885 487.5 L1890 482.5 L1895 487.5" fill="none" stroke="#111" stroke-width="2.5"/>
<circle cx="1868.6" cy="484" r="3.6" fill="none" stroke="#2b6fd6" stroke-width="2.4"/>
<!-- export -->
<path d="M1727.5 201.5 H1718 V219.5 H1727" fill="none" stroke="#1e8a84" stroke-width="2"/>
<path d="M1727.5 201.5 Q1733.5 201.8 1733.5 207.5 V210" fill="none" stroke="#1e8a84" stroke-width="2"/>
<path d="M1719 202.5 H1727 Q1732.6 203 1732.6 208 V210 Q1726 212 1725 219 H1719 Z" fill="#c6ecea"/>
<path d="M1722 214 Q1723.5 208 1725 204.5" fill="none" stroke="#7cbab6" stroke-width="1"/>
<circle cx="1733.4" cy="217.2" r="6.2" fill="#1e8a84"/>
<path d="M1730 217.2 H1736.4 M1734 214.8 L1736.6 217.2 L1734 219.6" fill="none" stroke="#fff" stroke-width="1.6"/>
<!-- edit -->
<rect x="1716.8" y="247.6" width="20" height="7.6" fill="#f4b8dd" stroke="#c63f8c" stroke-width="2"/>
<rect x="1716.8" y="258.8" width="9.6" height="8" fill="#f4b8dd" stroke="#c63f8c" stroke-width="2"/>
<path d="M1729.2 259.6 H1739 M1729.2 262.6 H1740 M1729.2 265.8 H1739" stroke="#c63f8c" stroke-width="1.2"/>
<!-- create -->
<path d="M1727.5 291.5 H1718 V309.5 H1727" fill="none" stroke="#c8404e" stroke-width="2"/>
<path d="M1727.5 291.5 Q1733.5 291.8 1733.5 297.5 V300" fill="none" stroke="#c8404e" stroke-width="2"/>
<path d="M1719 292.5 H1727 Q1732.6 293 1732.6 298 V300 Q1726 302 1725 309 H1719 Z" fill="#fbd9dc"/>
<circle cx="1733.6" cy="308.2" r="6.2" fill="#c8404e"/>
<path d="M1730.2 308.2 H1737 M1733.6 304.8 V311.6" stroke="#fff" stroke-width="1.8"/>
<!-- comment -->
<path d="M1717 338 Q1717 337 1718 337 H1736 Q1737 337 1737 338 V351 Q1737 352 1736 352 H1726.5 L1724 357 L1722 352 H1718 Q1717 352 1717 351 Z" fill="#d9b52c"/>
<path d="M1721.5 342.4 H1732.5 M1721.5 346 H1732.5" stroke="#fff3c8" stroke-width="1.6"/>
<!-- combine -->
<path d="M1727 378.5 H1716 V393.5 H1724" fill="none" stroke="#5b4fd0" stroke-width="2"/>
<path d="M1727.5 379.6 H1735 L1739.5 384 V395 H1727.5 Z" fill="#5b4fd0"/>
<path d="M1720.5 389 L1722 384 L1723.5 389" fill="none" stroke="#9d95e0" stroke-width="1"/>
<path d="M1725.8 389 V398" stroke="#5b4fd0" stroke-width="2"/>
<path d="M1720.8 397 H1730.8 L1725.8 403 Z" fill="#5b4fd0"/>
<!-- compress -->
<path d="M1721 439 V429 H1731 L1736 434 V439 M1721 442 V448 H1736 V442" fill="none" stroke="#1c8c88" stroke-width="2"/>
<path d="M1716 438 L1720 441 L1716 444 M1741 438 L1737 441 L1741 444" fill="none" stroke="#1c8c88" stroke-width="1.8"/>
<path d="M1724 444 L1728.5 433 L1733 444 M1725 441 Q1728.5 438 1732 441" fill="none" stroke="#1c8c88" stroke-width="1"/>
<!-- organize -->
<rect x="1727.6" y="475" width="10.4" height="19" fill="#dff0cf" stroke="#6dbb3e" stroke-width="2"/>
<path d="M1718 483 V494 H1725 M1718 483 H1725" fill="none" stroke="#6dbb3e" stroke-width="2" stroke-dasharray="2.2 1.6"/>
<path d="M1725 476 L1719.6 481" stroke="#6dbb3e" stroke-width="2"/>
<path d="M1718.4 476.8 V482.4 H1724" fill="none" stroke="#6dbb3e" stroke-width="2"/>
<!-- redact -->
<path d="M1716.5 671 L1729.6 656.4 Q1731.6 654.4 1733.4 656.2 Q1735 658 1733.2 660 L1721 671" fill="none" stroke="#d63a74" stroke-width="2.1"/>
<path d="M1716 672.4 H1736 V668 H1727 Z" fill="#d63a74"/>
<path d="M1719 668 L1727 660" stroke="#f2b4c9" stroke-width="1.4"/>
<!-- prepare form -->
<path d="M1719.5 700.8 H1728.5 L1735.6 707.6 V720 H1719.5 Z" fill="#f6d8f3" stroke="#b53dbb" stroke-width="2"/>
<path d="M1728.5 701 V707.6 H1735.5" fill="none" stroke="#b53dbb" stroke-width="1.8"/>
<rect x="1722.4" y="712.4" width="9.6" height="4.6" fill="#fff" stroke="#b53dbb" stroke-width="1.7"/>
<!-- request -->
<path d="M1719.5 746.8 H1728.5 L1735.6 753.6 V766 H1719.5 Z" fill="#f6d8f3" stroke="#b53dbb" stroke-width="2"/>
<path d="M1728.5 747 V753.6 H1735.5" fill="none" stroke="#b53dbb" stroke-width="1.8"/>
<path d="M1722.4 752 H1727 M1722.4 755 H1732" stroke="#b53dbb" stroke-width="1.2"/>
<path d="M1722.4 758.4 H1732.4 V763 H1722.4 Z M1727.4 758.4 V763" fill="none" stroke="#b53dbb" stroke-width="1.4"/>
<!-- fill sign -->
<path d="M1716.4 810.6 L1716.6 806 L1729 793.4 Q1731 791.4 1733 793.2 Q1734.8 795 1732.8 797.2 L1720.6 810.6 Z" fill="#e4d6f8" stroke="#8757d3" stroke-width="2"/>
<path d="M1716 811.4 H1722" stroke="#8757d3" stroke-width="2"/>
<path d="M1723.5 810.6 Q1725.5 806.5 1727 810 Q1728.5 812 1730 808.4 Q1731.4 810.8 1733 808.8 Q1734.4 811 1737.6 810.2" fill="none" stroke="#8757d3" stroke-width="1.8"/>
<!-- send for comments -->
<path d="M1716.8 838.8 H1725.2 L1730.6 844.4 V857.6 H1716.8 Z" fill="#fdf4c4" stroke="#d8c02a" stroke-width="2"/>
<path d="M1725.2 839 V844.4 H1730.4" fill="none" stroke="#d8c02a" stroke-width="1.8"/>
<path d="M1726.6 847.6 H1738.4 V857.4 H1732.6 L1730 860.4 V857.4 H1726.6 Z" fill="#d8c02a"/>
<path d="M1729.4 851.6 H1735.6" stroke="#fdf4c4" stroke-width="1.2"/>
<!-- more tools -->
<path d="M1717 897 L1726.6 887.4" stroke="#5c5c5c" stroke-width="3.4" stroke-linecap="round"/>
<path d="M1726 888 Q1724.6 882.6 1729.4 880.8 Q1731.4 880.2 1733.2 880.8 L1730 884 L1731 886 L1733 887 L1736.2 883.8 Q1737 889.6 1731.6 890.6 Q1729 891 1726 888 Z" fill="#5c5c5c"/>
<circle cx="1734.2" cy="901.6" r="6.8" fill="#5c5c5c" stroke="#fafafa" stroke-width="1.4"/>
<path d="M1730.8 901.6 H1737.6 M1734.2 898.2 V905" stroke="#fff" stroke-width="1.8"/>
<!-- scrollbar arrows, side arrows -->
<path d="M1655.6 139 L1658.6 136 L1661.6 139" fill="none" stroke="#444" stroke-width="1.6"/>
<path d="M1655.6 1069.6 L1658.6 1072.6 L1661.6 1069.6" fill="none" stroke="#444" stroke-width="1.6"/>
<path d="M1674.6 597 L1681 602.6 L1674.6 608.2 Z" fill="#555"/>
<path d="M7.8 597.8 L13.2 602.8 L7.8 607.8 Z" fill="#555"/>
</svg>
</body></html>
